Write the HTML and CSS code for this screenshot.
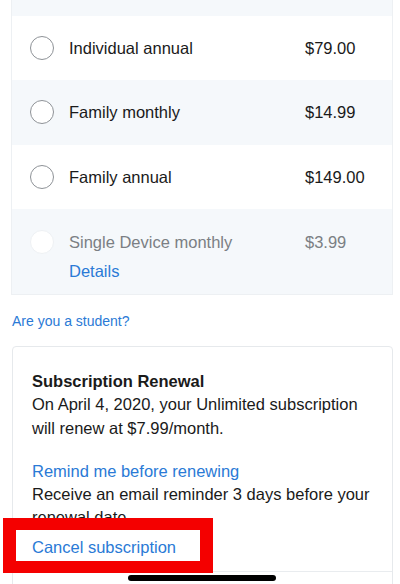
FILE: index.html
```html
<!DOCTYPE html>
<html lang="en">
<head>
  <meta charset="UTF-8">
  <meta name="viewport" content="width=device-width, initial-scale=1.0">
  <title>Manage Subscription</title>
  <link rel="stylesheet" href="styles.css">
</head>
<body>
  <div class="screen">
    <!-- Plan list -->
    <div class="plans">
      <div class="plan-row alt cut"></div>

      <label class="plan-row">
        <span class="radio"></span>
        <span class="plan-name">Individual annual</span>
        <span class="plan-price">$79.00</span>
      </label>

      <label class="plan-row alt tall">
        <span class="radio"></span>
        <span class="plan-name">Family monthly</span>
        <span class="plan-price">$14.99</span>
      </label>

      <label class="plan-row">
        <span class="radio"></span>
        <span class="plan-name">Family annual</span>
        <span class="plan-price">$149.00</span>
      </label>

      <div class="plan-row alt disabled">
        <span class="radio"></span>
        <div class="plan-name">
          <div>Single Device monthly</div>
          <a class="link details" href="#">Details</a>
        </div>
        <span class="plan-price">$3.99</span>
      </div>
    </div>

    <a class="link student" href="#">Are you a student?</a>

    <!-- Renewal card -->
    <div class="renewal">
      <div class="renewal-body">
        <h3>Subscription Renewal</h3>
        <p>On April 4, 2020, your Unlimited subscription will renew at $7.99/month.</p>

        <a class="link remind" href="#">Remind me before renewing</a>
        <p class="remind-note">Receive an email reminder 3 days before your renewal date</p>

        <a class="link cancel" href="#">Cancel subscription</a>
      </div>
      <div class="renewal-foot"></div>
    </div>

    <!-- highlight box drawn over the screenshot -->
    <div class="highlight"></div>
    <div class="home-bar"></div>
  </div>
</body>
</html>
```

FILE: styles.css
```css
/* Page */
body {
  margin: 0;
  padding: 0;
  background-color: #ffffff;
  font-family: "Liberation Sans", Arial, Helvetica, sans-serif;
  font-size: 16.5px;
  color: #1a1a1a;
}

.screen {
  position: relative;
  width: 400px;
  height: 584px;
  overflow: hidden;
}

.link {
  color: #2a7ad6;
  text-decoration: none;
}

/* Plan list */
.plans {
  margin: 0 7px 0 11px;
  border: 1px solid #edf0f3;
  border-top: none;
}

.plan-row {
  display: flex;
  align-items: center;
  padding: 20px 0 20px 18px;
  line-height: 24px;
  background-color: #ffffff;
}

.plan-row.alt {
  background-color: #f5f8fb;
}

.plan-row.tall {
  padding-bottom: 21px;
}

.plan-row.cut {
  height: 16px;
  padding: 0;
}

.radio {
  flex: 0 0 auto;
  width: 22px;
  height: 22px;
  border: 1.5px solid #8e9297;
  border-radius: 50%;
  background-color: #ffffff;
  margin-right: 15px;
}

.plan-name {
  flex: 1;
}

.plan-price {
  flex: 0 0 87px;
}

.plan-row.disabled {
  align-items: flex-start;
  padding: 21px 0 11px 18px;
  color: #7b7f84;
}

.plan-row.disabled .radio {
  border-color: #eef1f4;
}

.details {
  display: block;
  margin-top: 5px;
}

.student {
  display: block;
  margin: 16px 0 0 12px;
  font-size: 14px;
  line-height: 20px;
}

/* Renewal card */
.renewal {
  margin: 15px 7px 0 12px;
  border: 1px solid #e6e9ec;
  border-radius: 4px;
}

.renewal-body {
  padding: 23px 19px 12px;
}

.renewal h3 {
  margin: 0;
  font-size: 16.5px;
  line-height: 22px;
  font-weight: bold;
}

.renewal p {
  margin: 0;
  line-height: 24px;
}

.remind {
  display: block;
  margin-top: 20px;
  line-height: 23px;
}

.renewal p.remind-note {
  line-height: 23px;
}

.cancel {
  display: block;
  margin-top: 7px;
  line-height: 23px;
}

.renewal-foot {
  height: 40px;
  border-top: 1px solid #e9ecef;
}

/* Overlays */
.highlight {
  position: absolute;
  left: 3px;
  top: 518px;
  width: 184px;
  height: 31px;
  border: 12px solid #f40000;
  border-left-width: 13px;
  border-right-width: 13px;
}

.home-bar {
  position: absolute;
  left: 128px;
  top: 575px;
  width: 148px;
  height: 6px;
  border-radius: 3px;
  background-color: #000000;
}
```
